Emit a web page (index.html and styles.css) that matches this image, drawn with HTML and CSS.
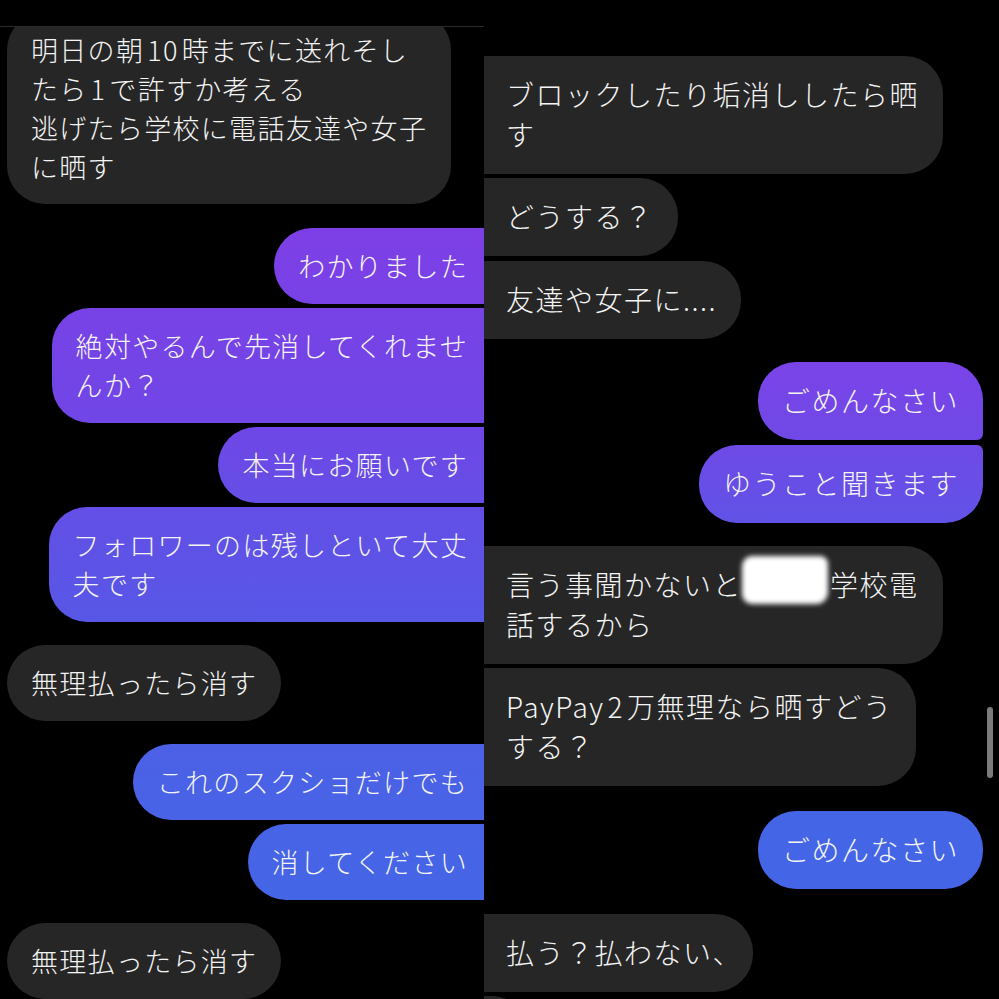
FILE: index.html
```html
<!DOCTYPE html>
<html lang="ja">
<head>
<meta charset="utf-8">
<title>DM</title>
<link rel="stylesheet" href="styles.css">
</head>
<body>
<div class="screen">
  <section class="pane pane-left">
    <div class="pane-header"></div>
    <div class="thread">
      <div class="msg recv first-left">明日の朝<span class="num">10</span>時までに送れそし<br>たら<span class="num">1</span>で許すか考える<br>逃げたら学校に電話友達や女子<br>に晒す</div>
      <div class="msg sent sent-l gap-m">わかりました</div>
      <div class="msg sent sent-l gap-s">絶対やるんで先消してくれませ<br>んか？</div>
      <div class="msg sent sent-l gap-s">本当にお願いです</div>
      <div class="msg sent sent-l gap-s">フォロワーのは残しといて大丈<br>夫です</div>
      <div class="msg recv gap-l">無理払ったら消す</div>
      <div class="msg sent sent-l gap-l">これのスクショだけでも</div>
      <div class="msg sent sent-l gap-s">消してください</div>
      <div class="msg recv gap-l">無理払ったら消す</div>
    </div>
  </section>
  <section class="pane pane-right">
    <div class="thread thread-right">
      <div class="msg recv first-right">ブロックしたり垢消ししたら晒<br>す</div>
      <div class="msg recv gap-s">どうする？</div>
      <div class="msg recv gap-s">友達や女子に....</div>
      <div class="msg sent sent-r grp-top gap-l">ごめんなさい</div>
      <div class="msg sent sent-r grp-bot gap-s">ゆうこと聞きます</div>
      <div class="msg recv gap-l">言う事聞かないと<span class="redact"></span>学校電<br>話するから</div>
      <div class="msg recv gap-s">PayPay<span class="num">2</span>万無理なら晒すどう<br>する？</div>
      <div class="msg sent sent-r gap-xl">ごめんなさい</div>
      <div class="msg recv gap-xl">払う？払わない<span class="tight">、</span></div>
      <div class="msg recv peek gap-s"></div>
    </div>
    <div class="scrollbar"></div>
  </section>
</div>
</body>
</html>
```
FILE: styles.css
```css
html, body {
  margin: 0;
  padding: 0;
  background: #000;
}

body {
  font-family: "Noto Sans CJK JP", "Noto Sans", sans-serif;
  font-weight: 300;
  color: #f4f4f4;
}

.screen {
  display: flex;
  width: 999px;
  height: 999px;
  overflow: hidden;
}

.pane {
  position: relative;
  height: 999px;
  overflow: hidden;
  display: flex;
  flex-direction: column;
}

.pane-left {
  width: 484px;
  flex: 0 0 484px;
}

.pane-right {
  width: 515px;
  flex: 0 0 515px;
}

.pane-header {
  height: 26px;
  flex: 0 0 26px;
  border-bottom: 1px solid #2a2a2a;
  position: relative;
  z-index: 2;
  background: #000;
}

.thread {
  display: flex;
  flex-direction: column;
  align-items: flex-start;
  padding-left: 7px;
  font-size: 27px;
  letter-spacing: 1.3px;
  line-height: 39px;
}

.thread-right {
  padding-left: 0;
  padding-right: 16px;
  padding-top: 56px;
  font-size: 28px;
  letter-spacing: 1.5px;
  line-height: 39.5px;
}

.msg {
  padding: 18px 24px 18.5px;
  border-radius: 38px;
  white-space: nowrap;
  box-sizing: border-box;
}

.thread-right .msg {
  padding: 19px 24px 19.5px;
}

.recv {
  background: #262626;
}

.thread-right .recv {
  margin-left: -40px;
  padding-left: 62px;
}

.sent {
  align-self: flex-end;
}

.sent-l {
  margin-right: -40px;
  padding-right: 56px;
  background: linear-gradient(180deg,
    #8b37e8 0px,
    #7d3fe6 228px,
    #7046e6 420px,
    #6250e6 520px,
    #5757e6 620px,
    #4b61e6 760px,
    #4466e6 900px,
    #4466e6 999px) fixed;
}

.sent-r {
  background: linear-gradient(180deg,
    #8c38e8 0px,
    #7b43e8 360px,
    #6f49e6 440px,
    #6152e6 520px,
    #4f5ee6 680px,
    #4466e6 809px,
    #4466e6 999px) fixed;
}

.grp-top {
  border-bottom-right-radius: 6px;
}

.grp-bot {
  border-top-right-radius: 6px;
}

.first-left {
  margin-top: -15.5px;
}

.num {
  padding: 0 3px;
}

.tight {
  letter-spacing: -12px;
}

.gap-s { margin-top: 4.5px; }
.gap-m { margin-top: 24px; }
.gap-l { margin-top: 23.5px; }
.gap-xl { margin-top: 25px; }

.redact {
  display: inline-block;
  width: 86px;
  height: 48px;
  margin: -14px 2px -10px 0;
  vertical-align: 2px;
  background: #fff;
  border-radius: 10px 8px 12px 10px;
  filter: blur(2.5px);
}

.peek {
  width: 78px;
  height: 78px;
}

.scrollbar {
  position: absolute;
  top: 707px;
  right: 6px;
  width: 6px;
  height: 71px;
  border-radius: 3px;
  background: #7b7b7b;
}
```
